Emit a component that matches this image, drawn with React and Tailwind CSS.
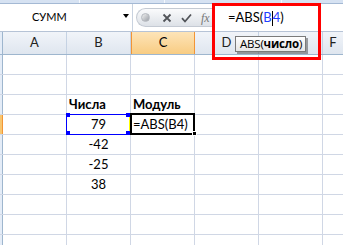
import React from "react";

const GRID = "border-[#d0d7e5]";

function Row({ b, c, bBold, cBold, bAlign = "center", active }) {
  return (
    <div className={`flex h-[20px] border-b ${GRID}`}>
      <div
        className={`w-[3px] shrink-0 border-r ${
          active ? "bg-[#f8c66f] border-[#f29536]" : "bg-[#e4ecf7] border-[#9eb6ce]"
        }`}
      />
      <div className={`w-[64px] shrink-0 border-r ${GRID}`} />
      <div
        className={`w-[64px] shrink-0 border-r ${GRID} flex items-center leading-[19px] px-[2px] text-[13px] text-black ${
          bAlign === "center" ? "justify-center" : "justify-start"
        } ${bBold ? "font-bold" : ""}`}
      >
        {b}
      </div>
      <div
        className={`w-[64px] shrink-0 border-r ${GRID} flex items-center leading-[19px] px-[2px] text-[13px] text-black whitespace-nowrap ${
          cBold ? "font-bold" : ""
        }`}
      >
        {c}
      </div>
      <div className={`w-[64px] shrink-0 border-r ${GRID}`} />
      <div className={`w-[64px] shrink-0 border-r ${GRID}`} />
      <div className="flex-1" />
    </div>
  );
}

export default function App() {
  const cols = ["A", "B", "C", "D", "", "F"];
  return (
    <div className="relative w-[343px] h-[245px] overflow-hidden bg-white font-['Lato',sans-serif]">
      {/* ribbon bottom band */}
      <div className="h-[4px] flex bg-[#d6e2f2] border-b border-[#a4b9d4]">
        <div className="w-[80px] border-r border-[#f4f8fd]" />
        <div className="w-[85px] border-r border-[#f4f8fd]" />
        <div className="w-[117px] border-r border-[#f4f8fd]" />
        <div className="flex-1" />
      </div>

      {/* formula bar */}
      <div className="h-[28px] flex border-b border-[#b6c3d6] bg-[#eef2f7]">
        <div className="relative w-[133px] shrink-0 bg-white border-r border-[#c9d3e0] flex items-center pl-[32px] text-[11px] text-black">
          СУММ
          <svg className="absolute left-[123px] top-[10px]" width="6" height="4" viewBox="0 0 6 4">
            <path d="M0 0H6L3 4Z" fill="#000" />
          </svg>
        </div>
        <div className="w-[79px] shrink-0 flex items-center bg-white">
          <div className="ml-[3px] h-[19px] flex-1 flex items-center rounded-l-full border border-r-0 border-[#c4cad3] bg-gradient-to-b from-[#fafbfc] to-[#dde1e7]">
            <div className="ml-[4px] w-[9px] h-[9px] rounded-full bg-gradient-to-br from-[#f2f2f2] to-[#9a9fa6] border border-[#b5b9bf]" />
            <svg className="ml-[12px]" width="10" height="10" viewBox="0 0 10 10">
              <path d="M1.5 1.5L8.5 8.5M8.5 1.5L1.5 8.5" stroke="#505358" strokeWidth="1.8" />
            </svg>
            <svg className="ml-[9px]" width="11" height="10" viewBox="0 0 11 10">
              <path d="M1 5.2L4 8.5L10 1.5" stroke="#505358" strokeWidth="1.8" fill="none" />
            </svg>
            <span className="ml-[9px] font-['Liberation_Serif',serif] italic text-[12px] leading-none text-[#777]">fx</span>
          </div>
        </div>
        <div className="flex-1 bg-white flex items-center pl-[16px] text-[13px] text-black whitespace-nowrap pt-[1px]">
          =ABS(
          <span className="text-[#1f3fff]">B</span>
          <span className="inline-block w-px h-[15px] bg-black" />
          <span className="text-[#1f3fff]">4</span>)
        </div>
      </div>

      {/* column headers */}
      <div className="h-[23px] flex border-b border-[#9eb6ce]">
        <div className="w-[3px] shrink-0 bg-[#e4ecf7] border-r border-[#9eb6ce]" />
        {cols.map((c, i) => {
          const sel = c === "C";
          return (
            <div
              key={i}
              className={`${c === "F" ? "flex-1" : "w-[64px] shrink-0 border-r"} flex items-center justify-center text-[13px] ${
                sel
                  ? "bg-gradient-to-b from-[#fde4b8] to-[#f8cc82] border-[#f29536] text-black border-l"
                  : "bg-gradient-to-b from-[#f1f4f9] to-[#dfe6ef] border-[#c5d2e3] text-[#222]"
              }`}
            >
              {c}
            </div>
          );
        })}
      </div>

      {/* rows */}
      <Row />
      <Row />
      <Row b="Числа" c="Модуль" bBold cBold bAlign="left" />
      <Row b="79" c="=ABS(B4)" active />
      <Row b="-42" />
      <Row b="-25" />
      <Row b="38" />
      <Row />
      <Row />
      <Row />

      {/* B4 reference highlight */}
      <div className="absolute left-[66px] top-[114px] w-[64px] h-[21px] border border-[#0000ff]" />
      <div className="absolute left-[66px] top-[113px] w-[4px] h-[4px] bg-[#0000ff]" />
      <div className="absolute left-[126px] top-[113px] w-[4px] h-[4px] bg-[#0000ff]" />
      <div className="absolute left-[66px] top-[131px] w-[4px] h-[4px] bg-[#0000ff]" />
      <div className="absolute left-[126px] top-[131px] w-[4px] h-[4px] bg-[#0000ff]" />
      <div className="absolute left-[129px] top-[117px] w-[2px] h-[14px] bg-[#ffff00]" />

      {/* active cell C4 */}
      <div className="absolute left-[130px] top-[113px] w-[65px] h-[22px] border-2 border-black" />
      <div className="absolute left-[192px] top-[131px] w-[5px] h-[5px] bg-black border border-white" />

      {/* tooltip */}
      <div className="absolute left-[235px] top-[36px] w-[71px] h-[16px] border border-[#7a7a7a] bg-gradient-to-b from-[#ffffff] to-[#e6e6e6] shadow-[2px_2px_0_rgba(0,0,0,0.35)] flex items-center pl-[4px] text-[11.5px] leading-none text-black whitespace-nowrap font-['Open_Sans',sans-serif] tracking-[-0.2px]">
        ABS(<b>число</b>)
      </div>

      {/* red frame */}
      <div className="absolute left-[212px] top-[3px] w-[109px] h-[57px] border-[3px] border-[#ff0000]" />
    </div>
  );
}
